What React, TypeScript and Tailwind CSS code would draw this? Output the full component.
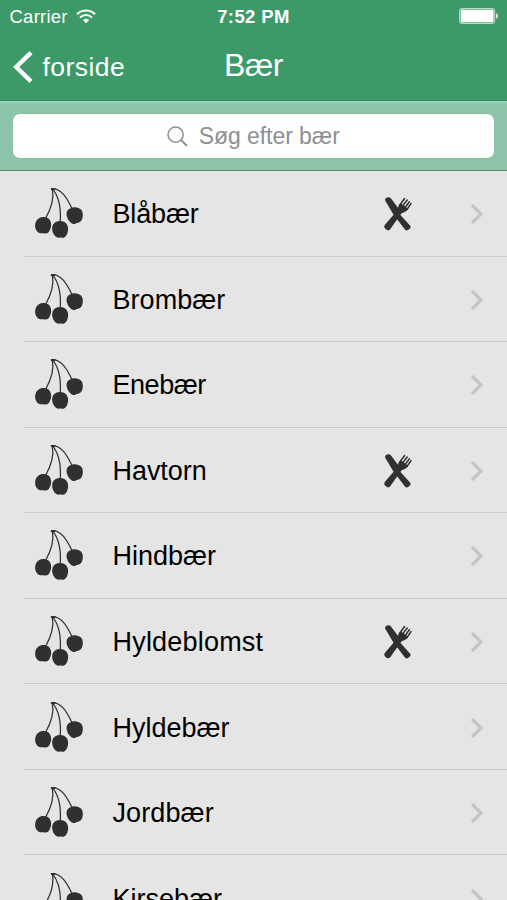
import React from 'react';

interface Berry {
    name: string;
    edible?: boolean;
    tracking: string;
}

const berries: Berry[] = [
    { name: 'Blåbær', edible: true, tracking: 'tracking-[-0.15px]' },
    { name: 'Brombær', tracking: 'tracking-[0.05px]' },
    { name: 'Enebær', tracking: 'tracking-[-0.45px]' },
    { name: 'Havtorn', edible: true, tracking: 'tracking-[-0.05px]' },
    { name: 'Hindbær', tracking: 'tracking-[0px]' },
    { name: 'Hyldeblomst', edible: true, tracking: 'tracking-[0.2px]' },
    { name: 'Hyldebær', tracking: 'tracking-[0px]' },
    { name: 'Jordbær', tracking: 'tracking-[0.1px]' },
    { name: 'Kirsebær', tracking: 'tracking-[0px]' },
];

const CherryIcon = () => (
    <svg viewBox="0 0 56 56" className="w-14 h-14 shrink-0 text-[#303030]" fill="none">
        <g stroke="currentColor" strokeWidth="1.25" strokeLinecap="round">
            <path d="M20.3 3.7C22.5 15 19 24 13.5 33.5" />
            <path d="M20.3 3.7C27.5 12 29 25 28.3 37" />
            <path d="M20 3.7C29 3.5 34.5 12 39.7 23" />
            <path d="M19.6 4h3" strokeWidth="1.8" />
        </g>
        <g fill="currentColor">
            <path d="M7 33.2C9 31.8 13.2 31.4 15.7 33C19 35 20 39.8 18.5 43.5C17.6 46 16.4 48.4 14.2 48.6C12.8 48.7 12.2 48 11 48.2C9 48.6 7 48.3 5.4 46.7C2.2 43.4 2.1 36 7 33.2Z" />
            <path d="M23.3 37.3C26.5 35.5 31.5 35.7 34 38.3C37.1 41.5 36.4 47 34.6 50C33.5 51.9 31.9 53 30.2 52.8C28.9 52.6 28.4 52.4 27.1 52.7C24.5 53.2 22.3 50.8 21.1 48.1C19.5 44.2 19.8 39.4 23.3 37.3Z" />
            <path d="M37.4 23.8C41 21.2 46.7 21.9 49.2 24.8C51.4 27.3 51.3 32.2 49.6 35.3C48.4 37.2 46.4 37.6 44.9 38.1C43.5 38.7 42.5 39.5 41 38.9C38.2 38 35.7 34.6 35 31.8C34.1 28.6 34.5 25.6 37.4 23.8Z" />
        </g>
    </svg>
);

const CutleryIcon = () => (
    <svg viewBox="0 0 28 36" className="w-7 h-9 text-[#303030]" fill="currentColor">
        {/* knife */}
        <path d="M1.6 2.4C3 1 5.6 0.8 7 2.4L16.6 15.2L15.8 18.2L26 29.6C26.9 30.7 26.8 31.8 26 32.5L24 34C23 34.7 21.6 34.4 20.9 33.4L11.8 21.6L9.7 19L1.7 5.4C1 4.2 0.8 3.4 1.6 2.4Z" />
        {/* fork handle and head */}
        <path d="M14.6 9.6C14 11.5 14.3 12.8 13.2 14.6L1 28.8C0 30 0 31.5 1 32.5L2.6 33.8C3.8 34.8 5.4 34.4 6.2 33.2L17 18C18.2 16.3 21 16.4 22.8 14.4L24 12.8L17 7.5Z" />
        <g fill="none" stroke="currentColor" strokeWidth="1.5" strokeLinecap="round">
            <path d="M15.6 9.2L20.6 2.5" />
            <path d="M18 10.8L23.2 4" />
            <path d="M20.4 12.5L25.4 5.8" />
            <path d="M22.8 13.7L27 7.6" />
        </g>
    </svg>
);

const BerryRow = ({ berry }: { berry: Berry }) => (
    <li className="h-[85.55px] flex pl-6">
        <div className="flex-1 flex items-center border-b border-[#c9c9cb] pl-2">
            <CherryIcon />
            <span className={`ml-[24.5px] pt-[2px] text-[27px] leading-8 text-black ${berry.tracking}`}>{berry.name}</span>
            <div className="ml-auto flex items-center pt-[2px] pr-[23px]">
                {berry.edible && <CutleryIcon />}
                <svg viewBox="0 0 14 22" className="w-3.5 h-[22px] ml-[58px]" fill="none" stroke="#c5c5c7" strokeWidth="3.2">
                    <path d="M2 2L11 11L2 20" />
                </svg>
            </div>
        </div>
    </li>
);

const StatusBar = () => (
    <div className="relative h-8 flex items-center justify-between pl-[9.5px] pr-[9px]">
        <div className="flex items-center gap-2">
            <span className="pt-px text-[18.5px] leading-8 tracking-[0.25px]">Carrier</span>
            <svg viewBox="0 0 20 15" className="w-5 h-[15px]" fill="none" stroke="white" strokeWidth="2">
                <path d="M1 5.3C6 0.3 14 0.3 19 5.3" />
                <path d="M4 8.6C7.4 5.2 12.6 5.2 16 8.6" />
                <path d="M10 14.2L6.8 11C8.6 9.4 11.4 9.4 13.2 11Z" fill="white" stroke="none" />
            </svg>
        </div>
        <span className="absolute left-0 right-0 top-px text-center text-[18.5px] leading-8 font-bold tracking-[0.4px]">7:52 PM</span>
        <svg viewBox="0 0 39 16" className="w-[39px] h-4">
            <rect x="0.6" y="0.6" width="35" height="14.8" rx="2.8" fill="none" stroke="#b9dcc9" strokeWidth="1.1" />
            <rect x="1.7" y="1.7" width="32.8" height="12.6" rx="1.4" fill="white" />
            <path d="M37 5.5C39.4 6 39.4 10 37 10.5Z" fill="white" />
        </svg>
    </div>
);

export default function App() {
    return (
        <div className="h-[900px] w-full overflow-hidden bg-[#e5e5e5] font-['Liberation_Sans',Arial,sans-serif]">
            <header className="h-[101px] bg-[#3d9967] text-white border-b border-[#338459]">
                <StatusBar />
                <div className="relative h-[70px] flex items-center pl-[13px]">
                    <svg viewBox="0 0 20 32" className="w-5 h-8 shrink-0" fill="none" stroke="white" strokeWidth="4.4">
                        <path d="M18 1.7L3.2 16L18 30.3" />
                    </svg>
                    <span className="ml-[9.5px] text-[26.5px] leading-8 tracking-[0.45px]">forside</span>
                    <h1 className="absolute left-0 right-0 top-[17px] text-center text-[32px] leading-8 tracking-[-0.5px]">Bær</h1>
                </div>
            </header>

            <div className="h-[70px] bg-[#8dc4a7] border-t-2 border-t-[#9bd2b5] border-b border-b-[#60876f] pt-[11px] pl-[12.5px] pr-[13px]">
                <div className="h-11 rounded-[7px] bg-white flex items-center justify-center text-[#8e8e93]">
                    <svg viewBox="0 0 21 21" className="w-[21px] h-[21px] mr-[11px]" fill="none" stroke="currentColor" strokeWidth="1.5">
                        <circle cx="8.6" cy="8.6" r="7.6" />
                        <path d="M14 14L20 20" strokeWidth="1.8" />
                    </svg>
                    <span className="text-[23px] leading-8 tracking-[-0.05px]">Søg efter bær</span>
                </div>
            </div>

            <ul>
                {berries.map(berry => (
                    <BerryRow key={berry.name} berry={berry} />
                ))}
            </ul>
        </div>
    );
}
